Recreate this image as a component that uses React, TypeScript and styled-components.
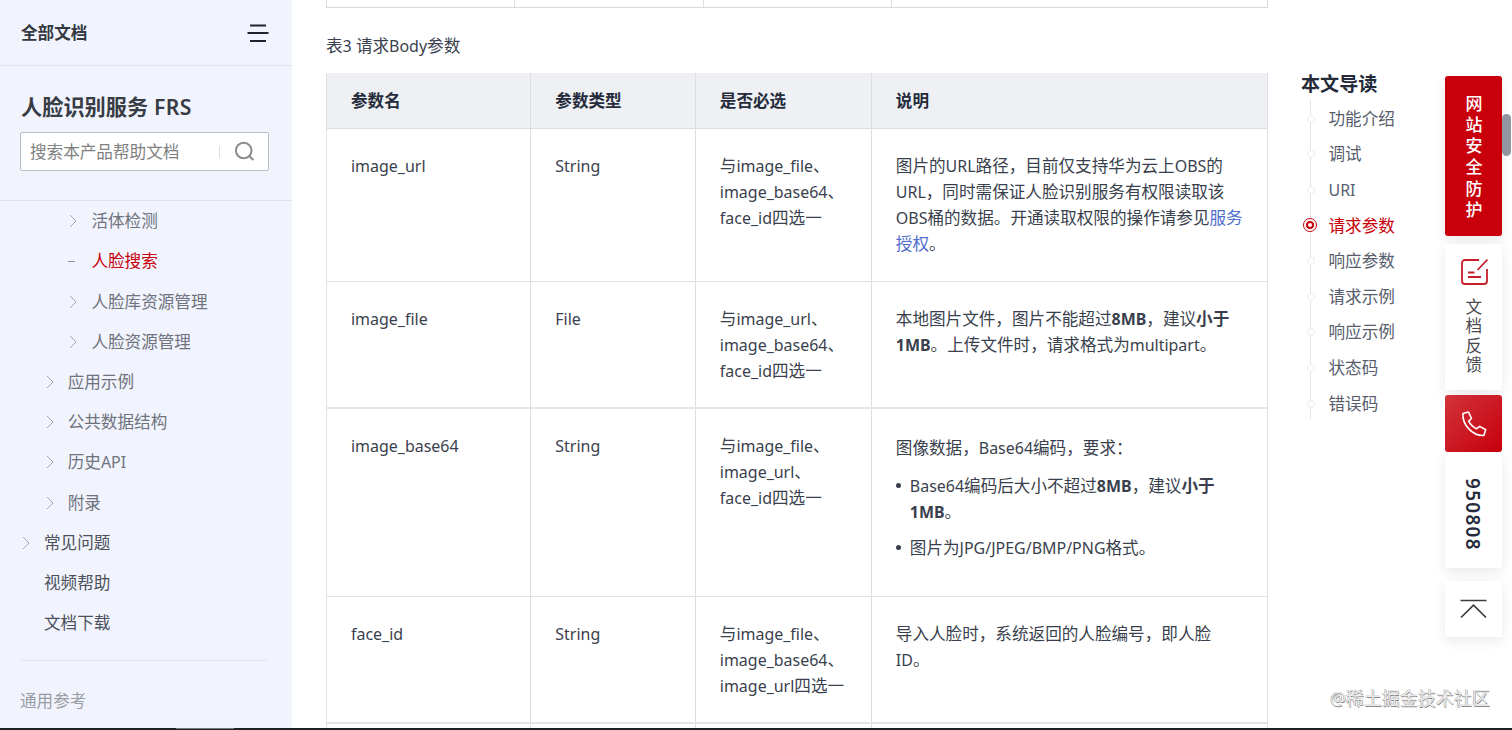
import React from "react";
import styled, { createGlobalStyle, css } from "styled-components";

const GlobalStyle = createGlobalStyle`
  *, *::before, *::after { box-sizing: border-box; }
  html, body { margin: 0; height: 730px; overflow: hidden; background: #fff; }
  body {
    font-family: "Noto Sans", "Noto Sans CJK SC", sans-serif;
    font-size: 16.6px;
    line-height: 26px;
    color: #3a3f4d;
  }
  ul, h2, h3 { margin: 0; padding: 0; list-style: none; }
`;

/* Latin runs are set slightly smaller than the Chinese text around them. */
const Latin = styled.span`
  font-size: 0.963em;
`;

const Mixed = ({ children }: { children: string }) => (
  <>
    {children.split(/([\x20-\x7e]+)/).map((part, i) =>
      i % 2 ? <Latin key={i}>{part}</Latin> : part
    )}
  </>
);

const Page = styled.div`
  width: 1512px;
  height: 730px;
  display: flex;
  flex-direction: column;
  overflow: hidden;
  position: relative;
`;

const Columns = styled.div`
  height: 728px;
  display: flex;
  overflow: hidden;
`;

const Taskbar = styled.div`
  height: 2px;
  padding-left: 176px;
  background: #1f2024;
`;

const TaskbarItem = styled.div`
  width: 58px;
  height: 1px;
  background: #77797d;
`;

/* ---------- sidebar ---------- */

const Sidebar = styled.aside`
  width: 292px;
  flex: none;
  height: 728px;
  background: #f1f4fd;
  overflow: hidden;
`;

const SidebarTop = styled.div`
  height: 66px;
  padding: 1px 23px 0 21px;
  display: flex;
  align-items: center;
  justify-content: space-between;
  border-bottom: 1px solid #e1e4ee;
  font-weight: 700;
  color: #333842;
`;

const Product = styled.div`
  height: 135px;
  padding: 26px 23px 0 20px;
  border-bottom: 1px solid #e1e4ee;
`;

const ProductTitle = styled.h2`
  height: 40px;
  padding-left: 1px;
  font-size: 21.2px;
  line-height: 30px;
  font-weight: 700;
  color: #383c45;
  white-space: nowrap;
  ${Latin} {
    font-size: 1em;
    font-weight: 600;
    letter-spacing: 0.4px;
  }
`;

const SearchBox = styled.div`
  width: 249px;
  height: 39px;
  display: flex;
  align-items: center;
  padding: 0 13px 0 9px;
  border: 1px solid #b9bdc8;
  border-radius: 2px;
  background: #fff;
  color: #808080;
`;

const SearchDivider = styled.span`
  width: 1px;
  height: 12px;
  margin: 0 14px 0 auto;
  background: #dcdcdc;
`;

const Tree = styled.ul`
  height: 459px;
`;

const TreeItem = styled.li<{ $level: number; $active?: boolean }>`
  height: 40.22px;
  padding-left: ${(p) => 20 + p.$level * 23.7}px;
  display: flex;
  align-items: center;
  color: ${(p) => (p.$active ? "#c7000b" : p.$level ? "#6f737d" : "#4c505b")};
  white-space: nowrap;
`;

const TreeMark = styled.span`
  width: 24px;
  flex: none;
  display: flex;
  align-items: center;
`;

const Dash = styled.span`
  width: 7px;
  height: 1px;
  margin-left: 1px;
  background: #8c909b;
`;

const SidebarFoot = styled.div`
  width: 248px;
  margin: 0 0 0 20px;
  padding-top: 27px;
  border-top: 1px solid #e3e6ef;
  color: #9a9da5;
`;

/* ---------- article ---------- */

const Article = styled.main`
  width: 976px;
  flex: none;
  padding-left: 34px;
  overflow: hidden;
`;

const PrevTable = styled.div`
  height: 8px;
  display: grid;
  grid-template-columns: 188px 189px 188px 1fr;
  border: 1px solid #d9dadd;
  border-top: 0;
`;

const PrevCell = styled.div`
  border-right: 1px solid #dfe0e3;
  &:last-child { border-right: 0; }
`;

const Caption = styled.div`
  height: 65px;
  padding-top: 25px;
`;

const Table = styled.div`
  width: 942px;
  border: 1px solid #dfe1e6;
  border-top: 0;
`;

const Row = styled.div<{ $h: number; $head?: boolean; $thick?: boolean }>`
  height: ${(p) => p.$h}px;
  display: grid;
  grid-template-columns: 204.3px 164.5px 176px 1fr;
  border-bottom: ${(p) => (p.$thick ? "2px solid #e3e5e8" : "1px solid #dfe1e6")};
  ${(p) =>
    p.$head &&
    css`
      background: #eef0f4;
      color: #252b3a;
      font-weight: 700;
      border-bottom-color: #dadce2;
    `}
`;

const Cell = styled.div<{ $head?: boolean; $wide?: boolean }>`
  padding: ${(p) => (p.$head ? "15px" : p.$wide ? "26px" : "24px")} 0 0 24px;
  border-right: 1.4px solid #dcdee3;
  white-space: nowrap;
  &:last-child { border-right: 0; }
`;

const Link = styled.span`
  color: #526ecc;
`;

const Bullets = styled.ul`
  padding-top: 12px;
`;

const Bullet = styled.li`
  display: flex;
  margin-bottom: 10px;
  &::before {
    content: "";
    width: 5px;
    height: 5px;
    margin: 10px 9px 0 0;
    border-radius: 50%;
    background: #3a3f4d;
  }
`;

/* ---------- reading guide ---------- */

const Guide = styled.nav`
  width: 177.4px;
  flex: none;
  padding: 71px 0 0 33px;
`;

const GuideTitle = styled.h3`
  font-size: 19.1px;
  line-height: 26px;
  font-weight: 700;
  color: #252b3a;
`;

const GuideList = styled.ul`
  height: 319px;
  margin: 3px 0 0 9px;
  padding-top: 1px;
  border-left: 1px solid #e3e3e5;
`;

const GuideItem = styled.li<{ $active?: boolean }>`
  height: 35.6px;
  display: flex;
  align-items: center;
  margin-left: -8px;
  color: ${(p) => (p.$active ? "#c7000b" : "#575d6c")};
`;

const GuideDot = styled.span<{ $active?: boolean }>`
  width: 8px;
  height: 8px;
  flex: none;
  margin: 0 14px 0 3.5px;
  border-radius: 50%;
  border: 1px solid #ececee;
  background: #fff;
  ${(p) =>
    p.$active &&
    css`
      width: 14px;
      height: 14px;
      margin: -1px 11.5px 0 0;
      border-color: #c7000b;
      padding: 2px;
      &::after {
        content: "";
        display: block;
        width: 8px;
        height: 8px;
        border-radius: 50%;
        border: 2.5px solid #c7000b;
      }
    `}
`;

/* ---------- floating rail ---------- */

const Rail = styled.div`
  width: 57px;
  flex: none;
  padding-top: 76px;
  display: flex;
  flex-direction: column;
`;

const cardShadow = "0 4px 12px rgba(0, 0, 0, 0.09)";

const SafetyCard = styled.div`
  height: 160px;
  padding-top: 16.5px;
  border-radius: 3px;
  background: #c9000c;
  box-shadow: ${cardShadow};
  color: #fff;
  text-align: center;
  font-size: 17px;
  font-weight: 500;
  line-height: 21.3px;
`;

const Vertical = styled.div`
  width: 20px;
  margin: 0 auto;
  white-space: normal;
  word-break: break-all;
`;

const FeedbackCard = styled.div`
  height: 146px;
  margin-top: 8px;
  padding-top: 14px;
  display: flex;
  flex-direction: column;
  align-items: center;
  background: #fff;
  box-shadow: ${cardShadow};
  color: #4b4b4f;
  text-align: center;
  line-height: 19.4px;
  svg { margin-bottom: 11px; flex: none; }
`;

const PhoneCard = styled.div`
  height: 57px;
  margin-top: 5px;
  display: flex;
  align-items: center;
  justify-content: center;
  border-radius: 3px;
  background: linear-gradient(135deg, #d2333b, #c7000b);
`;

const NumberCard = styled.div`
  height: 116px;
  padding-top: 8px;
  display: flex;
  align-items: center;
  justify-content: center;
  background: #fff;
  box-shadow: ${cardShadow};
`;

const Number = styled.span`
  writing-mode: vertical-rl;
  margin-right: 1px;
  font-size: 18.8px;
  letter-spacing: 1.4px;
  font-weight: 600;
  color: #252b3a;
`;

const TopCard = styled.div`
  height: 56px;
  margin-top: 13px;
  display: flex;
  align-items: center;
  justify-content: center;
  background: #fff;
  box-shadow: ${cardShadow};
`;

const ScrollTrack = styled.div`
  flex: 1;
  padding-top: 114px;
`;

const ScrollThumb = styled.div`
  width: 9px;
  height: 42px;
  border-radius: 5px;
  background: #9095a0;
`;

const Watermark = styled.div`
  position: absolute;
  right: 22px;
  top: 685px;
  font-size: 17.9px;
  letter-spacing: 0.1px;
  color: #ececec;
  text-shadow: -0.5px -0.5px 0.5px #999, 0.5px 0.5px 0.5px #888;
`;

const Chevron = () => (
  <svg width="12" height="14" viewBox="0 0 12 14" fill="none" stroke="#a3a7b2" strokeWidth="1">
    <path d="M3 1l6 6-6 6" />
  </svg>
);

const MenuIcon = () => (
  <svg width="22" height="18" viewBox="0 0 22 18" fill="none" stroke="#20232c" strokeWidth="2">
    <path d="M3 1.500h16M0.500 9h21M3 17h16" />
  </svg>
);

const SearchIcon = () => (
  <svg width="21" height="21" viewBox="0 0 21 21" fill="none" stroke="#8a8b8d" strokeWidth="2">
    <circle cx="9.7" cy="9.5" r="7.8" />
    <path d="M15 15l4.500 4" />
  </svg>
);

const FeedbackIcon = () => (
  <svg width="28" height="28" viewBox="0 0 28 28" fill="none" stroke="#c41f2b" strokeWidth="1.8">
    <path d="M19 2H5a3 3 0 0 0-3 3v18a3 3 0 0 0 3 3h19a3 3 0 0 0 3-3V11M27.500 1.500L17.500 12M8 14.500h6.500M8 19h13" />
  </svg>
);

const PhoneIcon = () => (
  <svg width="28" height="28" viewBox="0 0 28 28" fill="none" stroke="#fff" strokeWidth="1.6" strokeLinejoin="round">
    <path d="M3 3.500L8.500 2l3 6.500-2.800 2.700c1.800 3.600 4.400 6.100 7.800 7.600l3.200-2.400 6 3.400-1.900 5.700C12 26 2 14 3 3.500z" />
  </svg>
);

const TopIcon = () => (
  <svg width="27" height="20" viewBox="0 0 27 20" fill="none" stroke="#3c3c40" strokeWidth="1.7">
    <path d="M0.500 1.500h26M1 18.500L13.500 6.200 26 18.500" />
  </svg>
);

type Node = { label: string; level: number; mark?: "none" | "dash" };

const tree: Node[] = [
  { label: "活体检测", level: 2 },
  { label: "人脸搜索", level: 2, mark: "dash" },
  { label: "人脸库资源管理", level: 2 },
  { label: "人脸资源管理", level: 2 },
  { label: "应用示例", level: 1 },
  { label: "公共数据结构", level: 1 },
  { label: "历史API", level: 1 },
  { label: "附录", level: 1 },
  { label: "常见问题", level: 0 },
  { label: "视频帮助", level: 0, mark: "none" },
  { label: "文档下载", level: 0, mark: "none" },
];

const guide = ["功能介绍", "调试", "URI", "请求参数", "响应参数", "请求示例", "响应示例", "状态码", "错误码"];

const Lines = ({ items }: { items: string[] }) => (
  <>
    {items.map((t) => (
      <div key={t}><Mixed>{t}</Mixed></div>
    ))}
  </>
);

const B = ({ children }: { children: string }) => <b><Mixed>{children}</Mixed></b>;

const rows: {
  name: string;
  type: string;
  need: string[];
  h: number;
  wide?: boolean;
  thick?: boolean;
  desc: React.ReactNode;
}[] = [
  {
    name: "image_url",
    type: "String",
    need: ["与image_file、", "image_base64、", "face_id四选一"],
    h: 153,
    desc: (
      <>
        <Lines items={["图片的URL路径，目前仅支持华为云上OBS的", "URL，同时需保证人脸识别服务有权限读取该"]} />
        <div><Mixed>OBS桶的数据。开通读取权限的操作请参见</Mixed><Link>服务</Link></div>
        <div><Link>授权</Link>。</div>
      </>
    ),
  },
  {
    name: "image_file",
    type: "File",
    need: ["与image_url、", "image_base64、", "face_id四选一"],
    h: 127,
    thick: true,
    desc: (
      <>
        <div><Mixed>本地图片文件，图片不能超过</Mixed><B>8MB</B>，建议<B>小于</B></div>
        <div><B>1MB</B><Mixed>。上传文件时，请求格式为multipart。</Mixed></div>
      </>
    ),
  },
  {
    name: "image_base64",
    type: "String",
    need: ["与image_file、", "image_url、", "face_id四选一"],
    h: 188,
    wide: true,
    desc: (
      <>
        <div><Mixed>图像数据，Base64编码，要求：</Mixed></div>
        <Bullets>
          <Bullet>
            <div>
              <div><Mixed>Base64编码后大小不超过</Mixed><B>8MB</B>，建议<B>小于</B></div>
              <div><B>1MB</B>。</div>
            </div>
          </Bullet>
          <Bullet><div><Mixed>图片为JPG/JPEG/BMP/PNG格式。</Mixed></div></Bullet>
        </Bullets>
      </>
    ),
  },
  {
    name: "face_id",
    type: "String",
    need: ["与image_file、", "image_base64、", "image_url四选一"],
    h: 127,
    thick: true,
    desc: <Lines items={["导入人脸时，系统返回的人脸编号，即人脸", "ID。"]} />,
  },
];

export default function App() {
  return (
    <Page>
      <GlobalStyle />
      <Columns>
        <Sidebar>
          <SidebarTop>全部文档<MenuIcon /></SidebarTop>
          <Product>
            <ProductTitle><Mixed>人脸识别服务 FRS</Mixed></ProductTitle>
            <SearchBox>搜索本产品帮助文档<SearchDivider /><SearchIcon /></SearchBox>
          </Product>
          <Tree>
            {tree.map((n) => (
              <TreeItem key={n.label} $level={n.level} $active={n.mark === "dash"}>
                <TreeMark>{n.mark === "dash" ? <Dash /> : n.mark === "none" ? null : <Chevron />}</TreeMark>
                <span><Mixed>{n.label}</Mixed></span>
              </TreeItem>
            ))}
          </Tree>
          <SidebarFoot>通用参考</SidebarFoot>
        </Sidebar>

        <Article>
          <PrevTable><PrevCell /><PrevCell /><PrevCell /><PrevCell /></PrevTable>
          <Caption><Mixed>表3 请求Body参数</Mixed></Caption>
          <Table>
            <Row $h={56} $head>
              {["参数名", "参数类型", "是否必选", "说明"].map((t) => <Cell key={t} $head>{t}</Cell>)}
            </Row>
            {rows.map((r) => (
              <Row key={r.name} $h={r.h} $thick={r.thick}>
                <Cell><Mixed>{r.name}</Mixed></Cell>
                <Cell><Mixed>{r.type}</Mixed></Cell>
                <Cell><Lines items={r.need} /></Cell>
                <Cell $wide={r.wide}>{r.desc}</Cell>
              </Row>
            ))}
            <Row $h={20}><Cell /><Cell /><Cell /><Cell /></Row>
          </Table>
        </Article>

        <Guide>
          <GuideTitle>本文导读</GuideTitle>
          <GuideList>
            {guide.map((g, i) => (
              <GuideItem key={g} $active={i === 3}><GuideDot $active={i === 3} /><span><Mixed>{g}</Mixed></span></GuideItem>
            ))}
          </GuideList>
        </Guide>

        <Rail>
          <SafetyCard><Vertical>网站安全防护</Vertical></SafetyCard>
          <FeedbackCard><FeedbackIcon /><Vertical>文档反馈</Vertical></FeedbackCard>
          <PhoneCard><PhoneIcon /></PhoneCard>
          <NumberCard><Number>950808</Number></NumberCard>
          <TopCard><TopIcon /></TopCard>
        </Rail>
        <ScrollTrack><ScrollThumb /></ScrollTrack>
      </Columns>
      <Taskbar><TaskbarItem /></Taskbar>
      <Watermark>@稀土掘金技术社区</Watermark>
    </Page>
  );
}
